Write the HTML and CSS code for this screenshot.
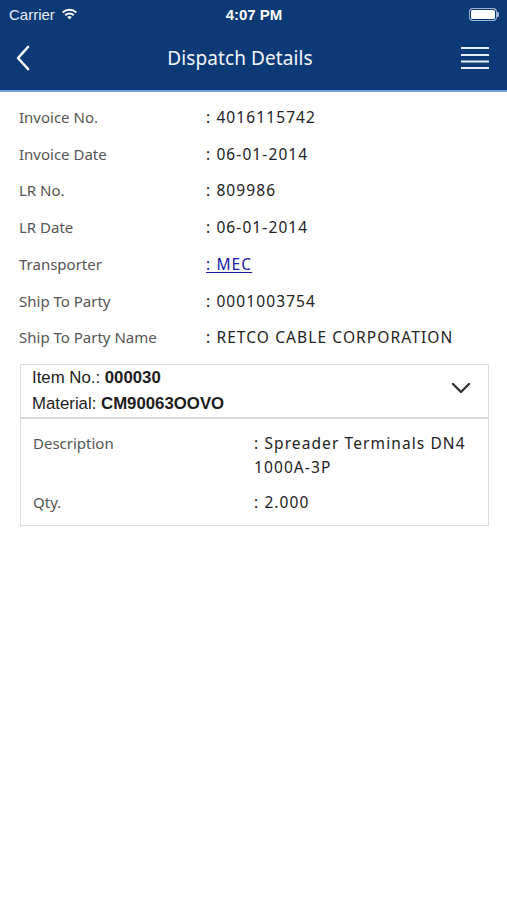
FILE: index.html
```html
<!DOCTYPE html>
<html>
<head>
<meta charset="utf-8">
<link rel="stylesheet" href="styles.css">
</head>
<body>
<header class="top">
  <div class="status">
    <div class="carrier">Carrier
      <svg class="wifi" width="17" height="12" viewBox="0 0 17 12"><path d="M8.5 11.5 L6.2 9 A3.3 3.3 0 0 1 10.8 9 Z" fill="#fff"/><path d="M3.6 6.4 A7 7 0 0 1 13.4 6.4 L12 7.9 A5 5 0 0 0 5 7.9 Z" fill="#fff"/><path d="M1 3.7 A10.8 10.8 0 0 1 16 3.7 L14.6 5.2 A8.8 8.8 0 0 0 2.4 5.2 Z" fill="#fff"/></svg>
    </div>
    <div class="time">4:07 PM</div>
    <div class="battery"><span class="cell"></span><span class="nub"></span></div>
  </div>
  <div class="nav">
    <svg class="back" width="16" height="26" viewBox="0 0 16 26"><path d="M13 2 L3 13 L13 24" fill="none" stroke="#fff" stroke-width="2.6" stroke-linecap="round" stroke-linejoin="round"/></svg>
    <h1 class="title">Dispatch Details</h1>
    <svg class="menu" width="30" height="24" viewBox="0 0 30 24"><g stroke="#e6eef8" stroke-width="2"><line x1="1" y1="2" x2="29" y2="2"/><line x1="1" y1="9" x2="29" y2="9"/><line x1="1" y1="15.5" x2="29" y2="15.5"/><line x1="1" y1="22" x2="29" y2="22"/></g></svg>
  </div>
</header>
<main class="content">
  <div class="rows">
    <div class="row"><span class="lbl">Invoice No.</span><span class="val">: 4016115742</span></div>
    <div class="row"><span class="lbl">Invoice Date</span><span class="val">: 06-01-2014</span></div>
    <div class="row"><span class="lbl">LR No.</span><span class="val">: 809986</span></div>
    <div class="row"><span class="lbl">LR Date</span><span class="val">: 06-01-2014</span></div>
    <div class="row"><span class="lbl">Transporter</span><span class="val"><a class="link" href="#">: MEC</a></span></div>
    <div class="row"><span class="lbl">Ship To Party</span><span class="val">: 0001003754</span></div>
    <div class="row"><span class="lbl">Ship To Party Name</span><span class="val">: RETCO CABLE CORPORATION</span></div>
  </div>
  <section class="card">
    <div class="card-head">
      <div class="head-text">
        <div>Item No.: <b>000030</b></div>
        <div>Material: <b>CM90063OOVO</b></div>
      </div>
      <svg class="chev" width="20" height="12" viewBox="0 0 20 12"><path d="M2 2 L10 10 L18 2" fill="none" stroke="#333" stroke-width="2.4" stroke-linecap="round" stroke-linejoin="round"/></svg>
    </div>
    <div class="card-body">
      <div class="drow"><span class="dlbl">Description</span><span class="dval">: Spreader Terminals DN4 1000A-3P</span></div>
      <div class="drow"><span class="dlbl">Qty.</span><span class="dval">: 2.000</span></div>
    </div>
  </section>
</main>
</body>
</html>
```
FILE: styles.css
```css
* { box-sizing: border-box; }
html, body { margin: 0; padding: 0; background: #fff; }
body { width: 507px; font-family: "Noto Sans", sans-serif; }

.top {
  background: #0b3a77;
  border-bottom: 2px solid #6ea3dd;
  height: 92px;
  color: #fff;
}
.status {
  height: 28px;
  display: flex;
  align-items: center;
  justify-content: space-between;
  padding: 0 8px 0 9px;
  font-family: "Liberation Sans", Arial, sans-serif;
  font-size: 15px;
}
.carrier { display: flex; align-items: center; gap: 6px; width: 120px; color: #e8eef7; }
.wifi { margin-top: -1px; }
.time { font-weight: bold; color: #fff; }
.battery { width: 120px; display: flex; justify-content: flex-end; align-items: center; }
.cell {
  width: 28px; height: 13px;
  border: 1.5px solid #9fb4d3;
  border-radius: 3.5px;
  background: #fff;
  box-shadow: inset 0 0 0 1px #0b3a77;
}
.nub { width: 2px; height: 5px; background: #9fb4d3; border-radius: 0 1px 1px 0; }

.nav {
  height: 62px;
  display: flex;
  align-items: center;
  justify-content: space-between;
  padding: 0 17px 2px 15px;
}
.back { display: block; }
.title {
  margin: 0 11px 0 0;
  font-weight: normal;
  font-size: 19px;
  color: #f2f6fb;
  letter-spacing: 0.1px;
}
.menu { display: block; margin-top: 0; }

.content { padding: 7px 19px 0 19px; }
.row {
  display: flex;
  line-height: 36.7px;
  font-size: 15px;
}
.lbl { width: 187px; color: #555; flex: none; }
.val { color: #222; letter-spacing: 1.1px; font-size: 15.5px; }
.link { color: #1a1aa6; text-decoration: underline; text-underline-offset: 2px; }

.card {
  margin: 8px 0 0 1px;
  border: 1px solid #dcdcdc;
  width: 469px;
}
.card-head {
  display: flex;
  align-items: center;
  justify-content: space-between;
  padding: 0 17px 0 11px;
  border-bottom: 2px solid #d8d8d8;
  font-family: "Liberation Sans", Arial, sans-serif;
  font-size: 16.8px;
  color: #1c1c1c;
  line-height: 26px;
}
.chev { margin-top: -6px; }
.card-body {
  padding: 12px 12px 11px 12px;
  display: flex;
  flex-direction: column;
  gap: 11px;
}
.drow { display: flex; font-size: 15px; line-height: 24px; }
.dlbl { width: 221px; flex: none; color: #555; }
.dval { color: #222; letter-spacing: 1.1px; font-size: 15.5px; }
```
